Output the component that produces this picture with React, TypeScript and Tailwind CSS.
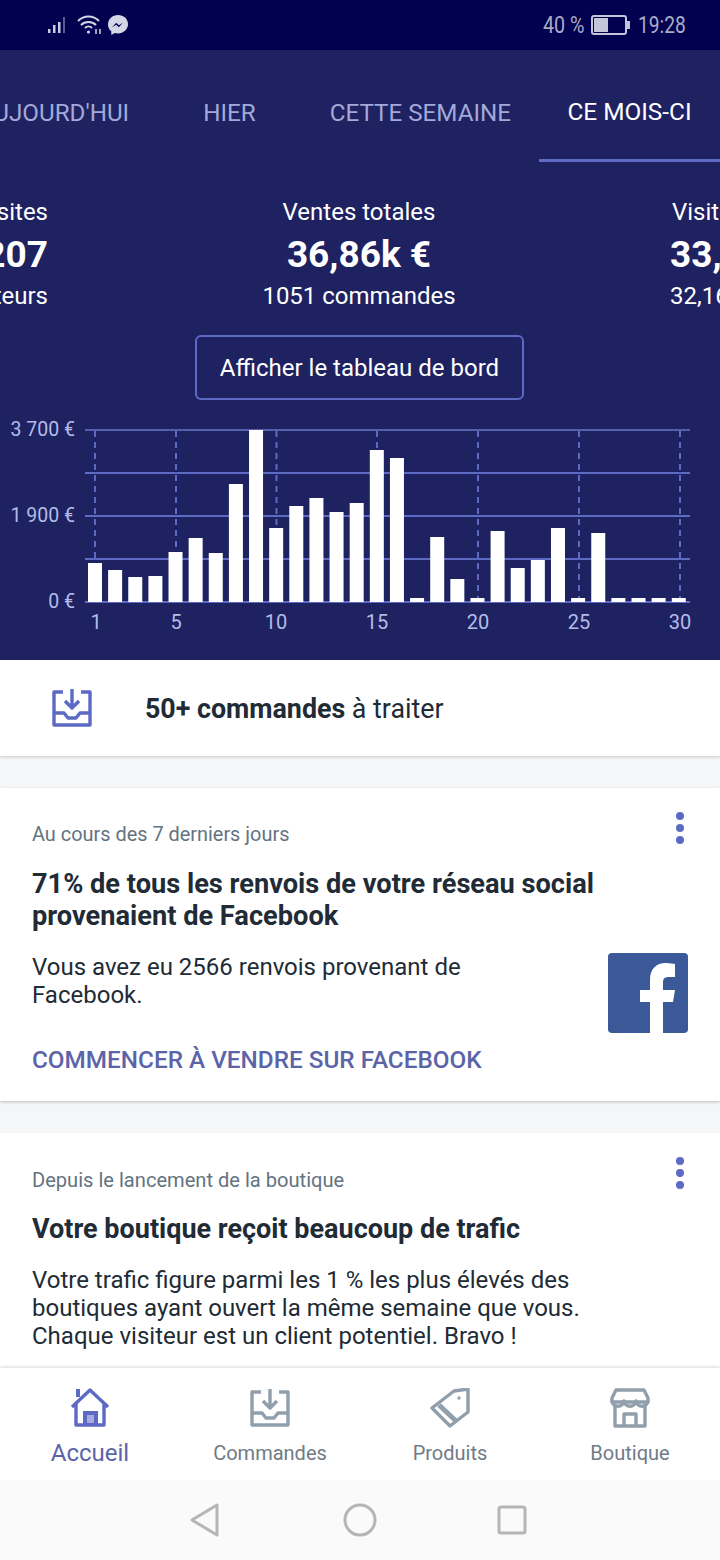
const tops = [563,570,577,576,552,538,553,484,430,528,506,498,512,503,450,458,598,537,579,598,531,568,560,528,598,533,598,598,598,598];
const indigo = "#5c6ac4";

function Chart() {
  const grid = [430,473,516,559,602];
  const dashes = [95,176,276.5,377,478,579,680];
  const xl: [string, number][] = [["1",96],["5",176],["10",276],["15",377],["20",478],["25",579],["30",680]];
  const yl: [string, number][] = [["3 700 €",436],["1 900 €",522],["0 €",608]];
  return (
    <svg width="720" height="250" viewBox="0 410 720 250" className="block" style={{fontFamily:"Roboto, sans-serif"}}>
      {dashes.map(x => <line key={x} x1={x} x2={x} y1="431" y2="602" stroke="#5c6ac4" strokeWidth="2" strokeDasharray="6 5" />)}
      {grid.map((y,i) => <line key={y} x1="85" x2="690" y1={y} y2={y} stroke={i===0?"#6a76c8":"#5c6ac4"} strokeWidth={i===0?1.5:2} />)}
      {tops.map((t,i) => <rect key={i} x={88+i*20.13} y={t} width="14" height={602-t} fill="#fff" />)}
      {yl.map(([s,y]) => <text key={s} x="75" y={y} textAnchor="end" fontSize="19.5" fill="#b3bce8">{s}</text>)}
      {xl.map(([s,x]) => <text key={s} x={x} y="629" textAnchor="middle" fontSize="20" fill="#b3bce8">{s}</text>)}
    </svg>
  );
}

function Inbox({color, w=40, h=38}:{color:string,w?:number,h?:number}) {
  return (
    <svg width={w} height={h} viewBox="0 0 40 38" fill="none" stroke={color} strokeWidth="3.4">
      <path d="M11 3H2v33h36V3h-9" strokeLinejoin="round" />
      <path d="M2 24h10l4 5h8l4-5h10" strokeLinejoin="round" />
      <path d="M20 0v17M13 12l7 7 7-7" strokeLinejoin="round" />
    </svg>
  );
}
function Home() {
  return (
    <svg width="40" height="40" viewBox="0 0 40 40" fill="none">
      <path d="M2 19 20 2l18 17M6 16v21h28V16" stroke="#5c6ac4" strokeWidth="3.4" strokeLinejoin="round" />
      <path d="M6 1h4v8H6z" fill="#5c6ac4" />
      <rect x="13" y="23" width="15" height="14" fill="#5c6ac4" />
      <rect x="17" y="27" width="7" height="8" fill="#a5ace0" />
    </svg>
  );
}
function Tag() {
  return (
    <svg width="40" height="40" viewBox="0 0 40 40" fill="none" stroke="#919eab" strokeWidth="3.4" strokeLinejoin="round">
      <path d="M24 3 38 1v23L20 38 2 20z" />
      <path d="M9 17 26 33" strokeWidth="5" />
      <circle cx="29" cy="10" r="1" fill="#919eab" strokeWidth="1.4" />
    </svg>
  );
}
function Store() {
  return (
    <svg width="40" height="40" viewBox="0 0 40 40" fill="none" stroke="#919eab" strokeWidth="3.4" strokeLinejoin="round">
      <path d="M6 2h28l4 8v4H2v-4z" />
      <path d="M2 13c1 7 11 7 12 0 1 7 11 7 12 0 1 7 11 7 12 0" />
      <path d="M5 18v20h30V18" />
      <path d="M14 37V26h12v11" />
    </svg>
  );
}
function Facebook() {
  return (
    <svg width="80" height="80" viewBox="0 0 80 80">
      <rect width="80" height="80" rx="4" fill="#3b5998" />
      <path d="M55 80V49h10l2-12H55v-7c0-4 1-6 6-6h6V11c-2 0-5-1-9-1-10 0-16 6-16 17v10H32v12h10v31z" fill="#fff" />
    </svg>
  );
}
function Dots() {
  return (
    <div className="flex flex-col gap-[4px]">
      <div className="h-2 w-2 rounded-full bg-[#5c6ac4]" />
      <div className="h-2 w-2 rounded-full bg-[#5c6ac4]" />
      <div className="h-2 w-2 rounded-full bg-[#5c6ac4]" />
    </div>
  );
}
function StatusIcons() {
  return (
    <div className="flex items-center ml-[48px] gap-[6px]">
      <svg width="22" height="22" viewBox="0 0 22 22">
        <rect x="0" y="15" width="2.5" height="4" fill="#c9cbe0" />
        <rect x="5" y="11" width="2.5" height="8" fill="#c9cbe0" />
        <rect x="10" y="8" width="2.5" height="11" fill="#c9cbe0" />
        <rect x="15" y="3" width="2" height="16" fill="#5a5c90" />
      </svg>
      <svg width="26" height="22" viewBox="0 0 26 22" fill="none" stroke="#d4d6e6" strokeWidth="2">
        <path d="M2 7c6-6 15-6 21 0M5 11c4-4 11-4 15 0M9 14c2-2 5-2 7 0" />
        <circle cx="12.5" cy="18" r="1.6" fill="#d4d6e6" stroke="none" />
        <path d="M20 15v5M24 15v5" strokeWidth="1.5" />
      </svg>
      <svg width="20" height="20" viewBox="0 0 17 17">
        <path d="M8.500 0C3.800 0 0 3.500 0 8c0 2.400 1 4.400 2.800 5.800V17l3-1.700c.9.300 1.800.400 2.700.400 4.700 0 8.500-3.500 8.500-8S13.200 0 8.500 0z" fill="#d4d6e6" />
        <path d="m3.500 10.500 3.500-4 2.200 2.200 3.500-2.200-3.500 4-2.200-2.200z" fill="#01014f" />
      </svg>
    </div>
  );
}

function Nav({label, active, children}:{label:string,active?:boolean,children:React.ReactNode}) {
  return (
    <div className="flex w-[180px] flex-col items-center">
      <div className="flex h-[40px] items-center justify-center">{children}</div>
      {active
        ? <div className="mt-[10px] text-[24px] leading-[30px] text-[#5c64a8]">{label}</div>
        : <div className="mt-[10px] text-[20px] leading-[30px] text-[#6f7b87]">{label}</div>}
    </div>
  );
}

export default function App() {
  return (
    <div className="flex h-[1560px] w-[720px] flex-col overflow-hidden bg-[#f4f6f8] text-[#212b36]" style={{fontFamily:"Roboto, sans-serif"}}>
      <div className="flex h-[50px] shrink-0 items-center justify-between bg-[#01014f] pr-[34px]">
        <StatusIcons />
        <div className="flex items-center text-[24px] text-[#a9abc6]">
          <span className="inline-block w-[41px] origin-left scale-x-[0.82] whitespace-nowrap">40 %</span>
          <div className="ml-[7px] flex items-center">
            <div className="flex h-[20px] w-[36px] items-center rounded-[3px] border-2 border-[#c4c5d8] pl-[1px]">
              <div className="h-[14px] w-[14px] bg-[#c4c5d8]" />
            </div>
            <div className="h-[8px] w-[3px] bg-[#c4c5d8]" />
          </div>
          <span className="ml-[8px] inline-block w-[48px] origin-left scale-x-[0.8] whitespace-nowrap">19:28</span>
        </div>
      </div>

      <div className="shrink-0 bg-[#1e2261]">
        <div className="flex h-[112px] justify-end overflow-hidden whitespace-nowrap text-[24.2px] text-[#a3a9d8]">
          <div className="flex h-[112px] shrink-0 items-center pt-[15px]">AUJOURD'HUI</div>
          <div className="ml-[74px] flex h-[112px] shrink-0 items-center pt-[15px]">HIER</div>
          <div className="ml-[74px] flex h-[112px] shrink-0 items-center pt-[15px]">CETTE SEMAINE</div>
          <div className="ml-[28px] flex h-[112px] w-[181px] shrink-0 items-center justify-center border-b-[3px] border-[#5c6ac4] pt-[16px] text-[24.4px] text-white">CE MOIS-CI</div>
        </div>

        <div className="mt-[36px] grid h-[112px] grid-cols-[48px_1fr_50px] text-[24px] leading-[28px] text-white">
          <div className="flex flex-col items-end overflow-hidden whitespace-nowrap">
            <div className="h-[33px]">Visites</div>
            <div className="h-[51px] text-[37px] font-bold leading-[48px]">33 207</div>
            <div className="h-[28px]">32 164 visiteurs</div>
          </div>
          <div className="flex flex-col items-center">
            <div className="h-[33px]">Ventes totales</div>
            <div className="h-[51px] text-[37px] font-bold leading-[48px]">36,86k €</div>
            <div className="h-[28px]">1051 commandes</div>
          </div>
          <div className="flex flex-col overflow-hidden whitespace-nowrap">
            <div className="h-[33px] pl-[2px]">Visites</div>
            <div className="h-[51px] text-[37px] font-bold leading-[48px]">33,2</div>
            <div className="h-[28px]">32,164</div>
          </div>
        </div>

        <div className="mt-[25px] flex justify-center pr-[1px]">
          <div className="flex h-[65px] w-[329px] items-center justify-center rounded-[6px] border-2 border-[#5c6ac4] text-[24px] text-white">Afficher le tableau de bord</div>
        </div>
        <div className="mt-[10px]"><Chart /></div>
      </div>

      <div className="flex h-[96px] shrink-0 items-center bg-white pl-[52px] shadow-[0_1px_3px_rgba(63,63,68,0.25)]">
        <Inbox color={indigo} />
        <div className="ml-[53px] pt-[2px] text-[26.8px]"><span className="font-bold">50+ commandes</span> à traiter</div>
      </div>

      <div className="mt-[32px] h-[313px] shrink-0 bg-white px-[32px] shadow-[0_1px_3px_rgba(63,63,68,0.3)]">
        <div className="flex items-start justify-between pt-[24px]">
          <div className="pt-[11px] text-[19.9px] leading-[24px] text-[#637381]">Au cours des 7 derniers jours</div>
          <div className="mr-[4px]"><Dots /></div>
        </div>
        <div className="mt-[21px] text-[27.2px] font-bold leading-[32px]">71% de tous les renvois de votre réseau social<br />provenaient de Facebook</div>
        <div className="mt-[21px] flex items-start justify-between">
          <div className="text-[24px] leading-[28px]">Vous avez eu 2566 renvois provenant de<br />Facebook.</div>
          <Facebook />
        </div>
        <div className="mt-[11px] text-[24.3px] font-medium leading-[32px] text-[#5c64a8]">COMMENCER À VENDRE SUR FACEBOOK</div>
      </div>

      <div className="mt-[32px] min-h-0 flex-1 bg-white px-[32px]">
        <div className="flex items-start justify-between pt-[24px]">
          <div className="pt-[11px] text-[20.1px] leading-[24px] text-[#637381]">Depuis le lancement de la boutique</div>
          <div className="mr-[4px]"><Dots /></div>
        </div>
        <div className="mt-[21px] text-[27px] font-bold leading-[32px]">Votre boutique reçoit beaucoup de trafic</div>
        <div className="mt-[21px] text-[24px] leading-[28px]">Votre trafic figure parmi les 1 % les plus élevés des<br />boutiques ayant ouvert la même semaine que vous.<br />Chaque visiteur est un client potentiel. Bravo !</div>
      </div>

      <div className="flex h-[112px] shrink-0 justify-center bg-white pt-[20px] shadow-[0_-1px_3px_rgba(63,63,68,0.2)]">
        <Nav label="Accueil" active><Home /></Nav>
        <Nav label="Commandes"><Inbox color="#919eab" /></Nav>
        <Nav label="Produits"><Tag /></Nav>
        <Nav label="Boutique"><Store /></Nav>
      </div>

      <div className="flex h-[80px] shrink-0 items-center bg-[#fafafa] pb-[1px] pl-[189px]">
        <svg width="32" height="34" viewBox="0 0 32 34" fill="none" stroke="#b5b5b5" strokeWidth="3" strokeLinejoin="round"><path d="M28 2v30L3 17z" /></svg>
        <svg className="ml-[122px]" width="34" height="34" viewBox="0 0 34 34" fill="none" stroke="#b5b5b5" strokeWidth="3"><circle cx="17" cy="17" r="15" /></svg>
        <svg className="ml-[120px]" width="30" height="30" viewBox="0 0 30 30" fill="none" stroke="#b5b5b5" strokeWidth="3"><rect x="2" y="2" width="26" height="26" rx="2" /></svg>
      </div>
    </div>
  );
}
